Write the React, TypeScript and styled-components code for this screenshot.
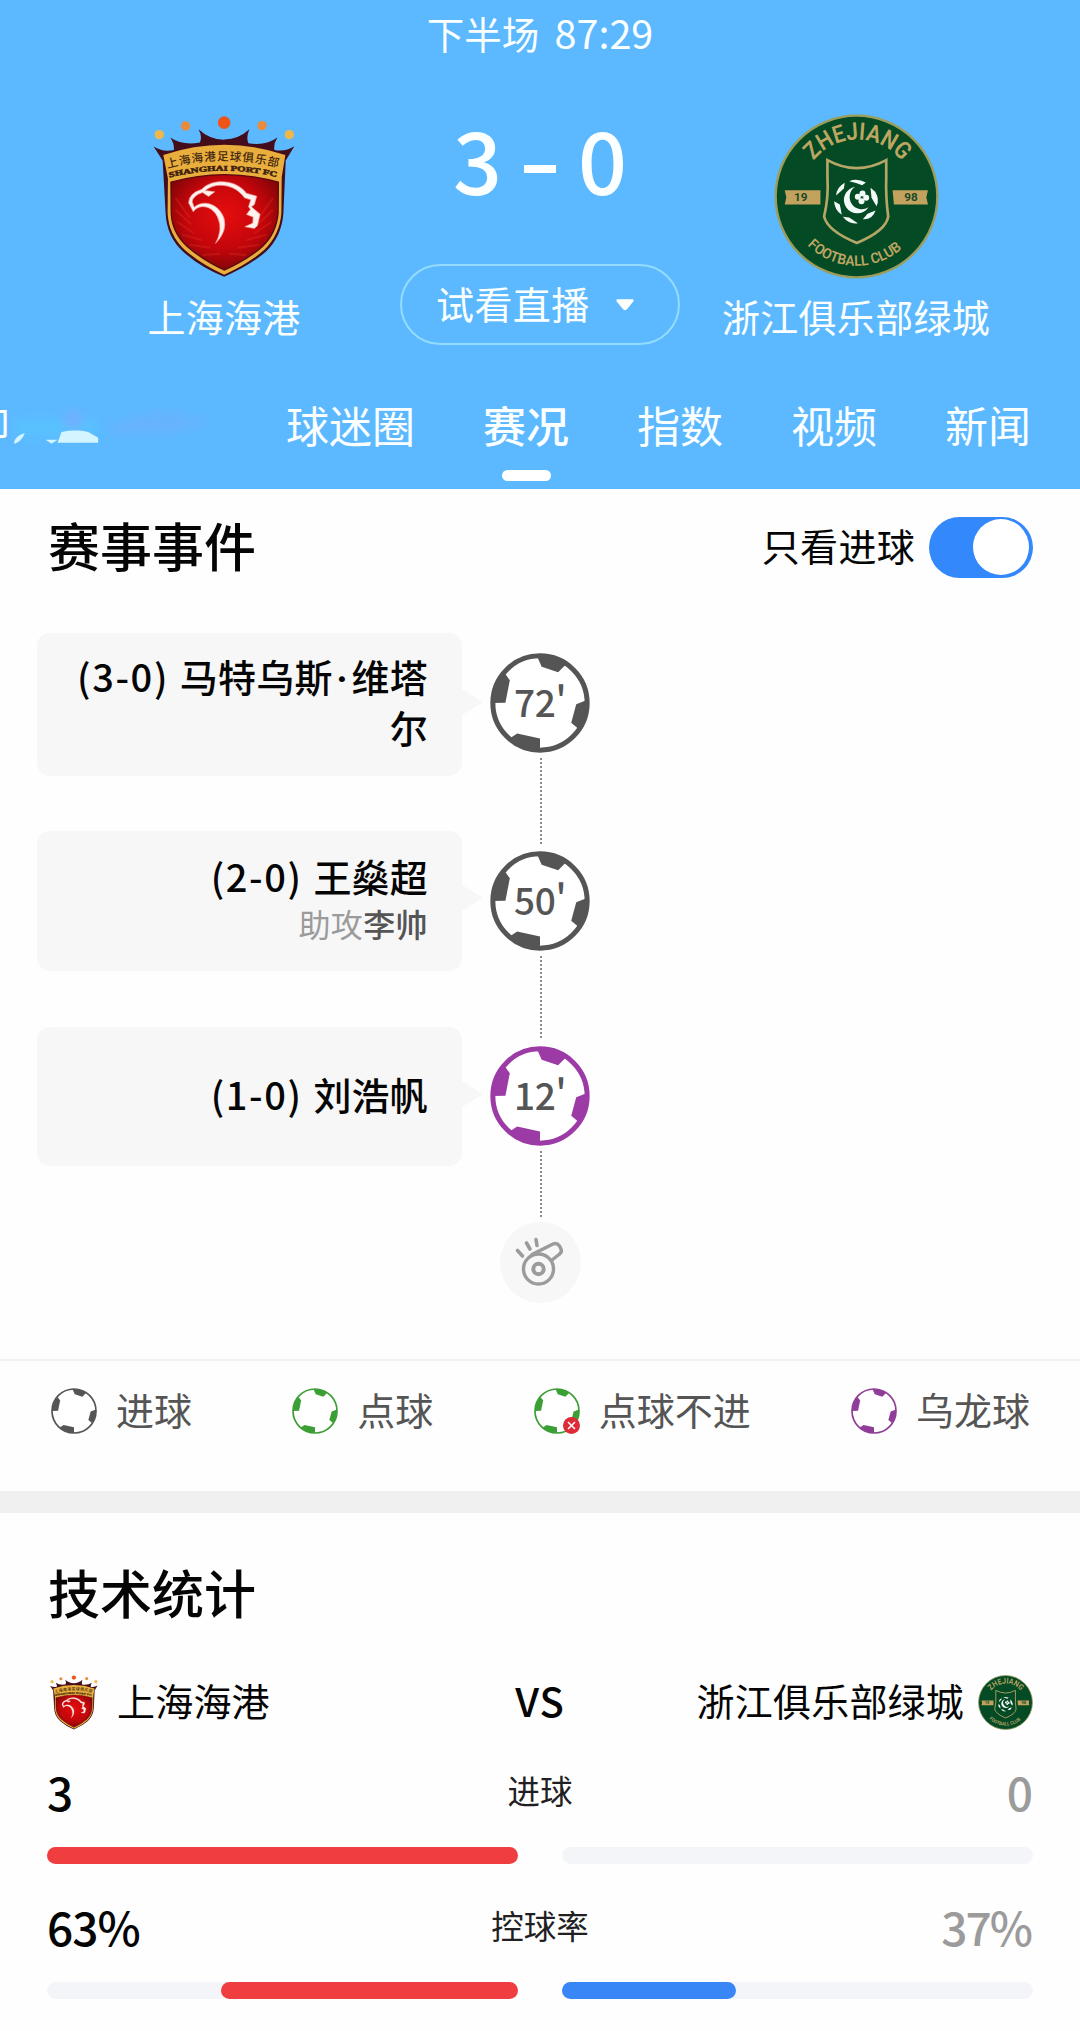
import React, { useState } from 'react';
import styled, { createGlobalStyle } from 'styled-components';

interface MatchEvent {
  score: string;
  player: string[];
  assist?: string;
  minute: number;
  color: string;
  height: number;
  gap: number;
  ballTop: number;
  line: number;
}

interface Stat {
  label: string;
  home: string;
  away: string;
  homePct: number;
  awayPct: number;
}

const GRAY = '#555555';
const GREEN = '#3c9f35';
const PURPLE = '#9c3ba6';

const events: MatchEvent[] = [
  { score: '3-0', player: ['马特乌斯', '维塔尔'], minute: 72, color: GRAY, height: 143, gap: 55, ballTop: 20, line: 88 },
  { score: '2-0', player: ['王燊超'], assist: '李帅', minute: 50, color: GRAY, height: 140, gap: 56, ballTop: 20, line: 82 },
  { score: '1-0', player: ['刘浩帆'], minute: 12, color: PURPLE, height: 139, gap: 56, ballTop: 19, line: 68 },
];

const stats: Stat[] = [
  { label: '进球', home: '3', away: '0', homePct: 100, awayPct: 0 },
  { label: '控球率', home: '63%', away: '37%', homePct: 63, awayPct: 37 },
];

const tabs = ['球迷圈', '赛况', '指数', '视频', '新闻'];

const Ball: React.FC<{ color: string; ring: number }> = ({ color, ring }) => (
  <svg viewBox="-149 -149 298 298" width="100%" height="100%">
    <circle r={148 - ring / 2} fill="#fff" stroke={color} strokeWidth={ring} />
    <g fill={color}>
      <path d="M-10 -142 L5 -108 L54 -92 L80 -118 Q40 -144 -10 -142Z" />
      <path d="M-106 -90 L-90 -68 L-103 -1 L-142 0 Q-140 -52 -106 -90Z" />
      <path d="M142 -10 L108 4 L93 59 L116 78 Q142 40 142 -10Z" />
      <path d="M-94 108 L-68 91 L0 106 L0 142 Q-54 140 -94 108Z" />
    </g>
  </svg>
);

const PortCrest: React.FC<{ id: string }> = ({ id }) => (
  <svg viewBox="70 45 428 490" width="100%" height="100%">
    <defs>
      <radialGradient id={`${id}-red`} cx="0.5" cy="0.42" r="0.6">
        <stop offset="0" stopColor="#e60d0d" />
        <stop offset="0.6" stopColor="#c3060b" />
        <stop offset="1" stopColor="#7d0508" />
      </radialGradient>
      <path id={`${id}-cn`} d="M113 205 Q284 158 452 205" />
      <path id={`${id}-en`} d="M118 233 Q284 192 446 233" />
    </defs>
    <path
      d="M71 140 Q98 158 132 150 Q133 130 121 113 Q158 138 210 128 Q218 110 206 88 Q240 120 284 119 Q326 118 359 88 Q348 112 356 130 Q410 138 443 113 Q431 132 434 150 Q468 156 494 139 L468 182 L461 340 Q456 410 408 456 Q360 498 283 531 Q210 502 160 456 Q110 410 107 340 L98 182Z"
      fill="#430d1b"
    />
    <path
      d="M100 165 Q284 104 467 165 L456 232 L455 340 Q450 404 404 450 Q356 492 283 525 Q214 494 164 450 Q116 404 113 340 L114 236Z"
      fill="#e9ae3c"
    />
    <path
      d="M123 247 Q284 201 446 247 L445 340 Q440 400 398 440 Q350 482 283 511 Q220 482 172 440 Q126 398 124 340Z"
      fill={`url(#${id}-red)`}
      stroke="#5a0b10"
      strokeWidth="4"
    />
    <g stroke="#ef3224" strokeWidth="6" opacity="0.3" fill="none">
      <path d="M137 295 L180 354 M137 330 L184 374 M141 365 L194 402 M157 405 L216 421 M179 435 L242 444 M218 466 L270 462" />
      <path d="M430 295 L387 354 M430 330 L383 374 M426 365 L373 402 M410 405 L351 421 M388 435 L325 444 M349 466 L297 462" />
    </g>
    <path
      d="M190 336 L176 309 Q177 280 216 268 C244 236 318 236 350 280 L381 289 L374 314 L365 321 L391 343 L383 378 L374 386 L345 381 L369 370 L370 352 L350 344 L362 328 L356 321 L363 300 L344 294 C314 252 259 246 226 272 L255 276 L236 290 L218 278 Q188 288 187 306 L193 322 C222 297 269 313 283 357 Q293 395 257 431 Q279 390 265 357 C253 320 210 308 190 336Z"
      fill="#fff1ee"
      stroke="#f29a92"
      strokeWidth="2"
    />
    <text fontSize="35" fontFamily="'Noto Sans CJK SC', sans-serif" fontWeight="500" fill="#43270f">
      <textPath href={`#${id}-cn`} textLength="336">上海海港足球俱乐部</textPath>
    </text>
    <text fontSize="22" fontWeight="700" fontFamily="'Liberation Serif', serif" fill="#3d210f" stroke="#3d210f" strokeWidth="1.5">
      <textPath href={`#${id}-en`} textLength="326" lengthAdjust="spacingAndGlyphs">SHANGHAI PORT FC</textPath>
    </text>
    <circle cx="88" cy="104" r="14" fill="#eeb84b" />
    <circle cx="167" cy="78" r="14" fill="#e98b3c" />
    <circle cx="283" cy="68" r="19" fill="#ee5418" />
    <circle cx="397" cy="77" r="14" fill="#e98b3c" />
    <circle cx="479" cy="104" r="14" fill="#eeb84b" />
  </svg>
);

const ZhejiangCrest: React.FC<{ id: string }> = ({ id }) => (
  <svg viewBox="43 43 494 494" width="100%" height="100%">
    <defs>
      <path id={`${id}-top`} d="M161 183 A168 168 0 0 1 427 187" />
      <path id={`${id}-bottom`} d="M143 436 A207 207 0 0 0 441 432" />
    </defs>
    <circle cx="290" cy="290" r="242" fill="#044a25" stroke="#9b9d5b" strokeWidth="7" />
    <g fontFamily="Roboto, sans-serif" fontWeight="600" fill="#bda662">
      <text fontSize="72">
        <textPath href={`#${id}-top`} textLength="304" lengthAdjust="spacingAndGlyphs">ZHEJIANG</textPath>
      </text>
      <text fontSize="43">
        <textPath href={`#${id}-bottom`} textLength="312" lengthAdjust="spacingAndGlyphs">FOOTBALL CLUB</textPath>
      </text>
    </g>
    <path d="M75 271 H182 V314 H75 L80 292Z M398 271 H504 L499 292 L504 314 H402Z" fill="#c2a25c" />
    <g fontFamily="Roboto, sans-serif" fontWeight="700" fontSize="35" fill="#174a2a">
      <text x="103" y="305">19</text>
      <text x="433" y="305">98</text>
    </g>
    <path
      d="M203 181 Q290 229 379 181 V235 Q377 290 385 350 Q378 393 291 429 Q203 393 193 350 Q207 290 203 235Z"
      fill="#044a25"
      stroke="#b5a667"
      strokeWidth="8"
    />
    <g fill="#f2fbf8">
      <path d="M268 244 Q292 234 318 248 L307 256 Q290 249 268 244Z" />
      <path d="M229 287 Q231 262 255 249 L252 266Z" />
      <path d="M223 304 L240 314 L246 345 Q224 330 223 304Z" />
      <path d="M249 351 L268 353 L294 370 Q267 374 249 351Z" />
      <path d="M309 358 L323 342 L347 332 Q338 360 309 358Z" />
      <path d="M332 264 L346 276 Q360 300 350 319 L335 294Z" />
      <path d="M286 261 A40 40 0 1 0 326 322 A32 32 0 1 1 286 261Z" />
      <circle cx="294" cy="291" r="9" />
      <circle cx="308" cy="281" r="9" />
      <circle cx="319" cy="294" r="9" />
      <circle cx="305" cy="304" r="9" />
    </g>
  </svg>
);

const Whistle = () => (
  <svg viewBox="0 0 81 81" width="81" height="81" fill="none" stroke="#9b9b9b" strokeWidth="3.4" strokeLinecap="round">
    <circle cx="38.5" cy="47" r="15" />
    <circle cx="38.5" cy="47" r="5.2" strokeWidth="4" />
    <path d="M32 32.5 L53 22 Q57 20.5 59.5 24 L61 27 Q62.5 30 59 32.5 L52 38" strokeLinejoin="round" />
    <path d="M17.5 28.5 L22.5 34 M26.5 21 L30 27 M36 17.5 L37 23.5" strokeWidth="3.6" />
  </svg>
);

const App: React.FC = () => {
  const [goalsOnly, setGoalsOnly] = useState(true);
  const [activeTab, setActiveTab] = useState('赛况');

  return (
    <>
      <GlobalStyle />
      <Page>
        <Header>
          <MatchClock>下半场 <span>87:29</span></MatchClock>
          <MatchRow>
            <Team>
              <HomeCrest><PortCrest id="home" /></HomeCrest>
              <TeamName>上海海港</TeamName>
            </Team>
            <Center>
              <Score><span>3</span><Dash /><span>0</span></Score>
              <LiveButton>
                试看直播
                <svg width="20" height="14" viewBox="0 0 20 14">
                  <path d="M2.5 2.5 H17.5 L11 10.5 Q10 11.5 9 10.5Z" fill="#fff" stroke="#fff" strokeWidth="2.4" strokeLinejoin="round" />
                </svg>
              </LiveButton>
            </Center>
            <Team>
              <AwayCrest><ZhejiangCrest id="away" /></AwayCrest>
              <TeamName>浙江俱乐部绿城</TeamName>
            </Team>
          </MatchRow>
          <Tabs>
            <CutTab>
              <span>印</span>
              <svg width="210" height="56" viewBox="0 0 210 56">
                <defs>
                  <filter id="smear" x="-20%" y="-50%" width="140%" height="200%">
                    <feGaussianBlur stdDeviation="5" />
                  </filter>
                  <filter id="edge"><feGaussianBlur stdDeviation="0.8" /></filter>
                </defs>
                <g filter="url(#smear)">
                  <path d="M6 24 H86 V40 H4Z" fill="#58c2ff" />
                  <circle cx="64" cy="24" r="10" fill="#6fb0ff" />
                  <path d="M100 28 L155 14 L205 26 L160 38 H100Z" fill="#66b3fc" />
                </g>
                <g filter="url(#edge)" fill="#d4f5ff">
                  <path d="M4 47 Q5 40 15 37 Q12 45 5 48Z" />
                  <path d="M36 44 L48 44 L42 48Z" />
                  <path d="M52 36 Q66 33 79 36 L89 42 V47 H48Z" />
                </g>
              </svg>
            </CutTab>
            {tabs.map((tab) => (
              <Tab key={tab} $active={tab === activeTab} onClick={() => setActiveTab(tab)}>
                {tab}
              </Tab>
            ))}
          </Tabs>
        </Header>

        <EventsHeader>
          <SectionTitle>赛事事件</SectionTitle>
          <Filter>
            <span>只看进球</span>
            <Switch $on={goalsOnly} onClick={() => setGoalsOnly(!goalsOnly)} />
          </Filter>
        </EventsHeader>

        <Timeline>
          {events.map((event) => (
            <EventRow key={event.minute} $height={event.height} $gap={event.gap}>
              <EventCard>
                <Scorer>
                  <EventScore>({event.score})</EventScore> {event.player[0]}
                  {event.player[1] && <><NameDot>·</NameDot>{event.player[1]}</>}
                </Scorer>
                {event.assist && <Assist>助攻<b>{event.assist}</b></Assist>}
              </EventCard>
              <Arrow />
              <Marker $top={event.ballTop}>
                <BigBall>
                  <Ball color={event.color} ring={15} />
                  <Minute>{event.minute}<sup>'</sup></Minute>
                </BigBall>
                <Dots $length={event.line} />
              </Marker>
            </EventRow>
          ))}
          <WhistleBadge><Whistle /></WhistleBadge>
        </Timeline>

        <Legend>
          <LegendItem><SmallBall><Ball color={GRAY} ring={11} /></SmallBall>进球</LegendItem>
          <LegendItem><SmallBall><Ball color={GREEN} ring={11} /></SmallBall>点球</LegendItem>
          <LegendItem>
            <SmallBall>
              <Ball color={GREEN} ring={11} />
              <MissBadge>
                <svg width="17" height="17" viewBox="0 0 17 17" stroke="#fff" strokeWidth="1.5">
                  <path d="M5 5 L12 12 M12 5 L5 12" />
                </svg>
              </MissBadge>
            </SmallBall>
            点球不进
          </LegendItem>
          <LegendItem><SmallBall><Ball color="#8f3d98" ring={11} /></SmallBall>乌龙球</LegendItem>
        </Legend>

        <Band />

        <StatsSection>
          <SectionTitle>技术统计</SectionTitle>
          <Versus>
            <Side>
              <MiniPort><PortCrest id="mini-home" /></MiniPort>
              <SideName>上海海港</SideName>
            </Side>
            <Vs>VS</Vs>
            <Side $right>
              <SideName>浙江俱乐部绿城</SideName>
              <MiniZhejiang><ZhejiangCrest id="mini-away" /></MiniZhejiang>
            </Side>
          </Versus>
          {stats.map((stat) => (
            <StatBlock key={stat.label}>
              <StatLine>
                <StatValue>{stat.home}</StatValue>
                <StatLabel>{stat.label}</StatLabel>
                <StatValue $away>{stat.away}</StatValue>
              </StatLine>
              <Bars>
                <Track $reverse>
                  <Fill $color="#f03e40" style={{ width: `${stat.homePct}%` }} />
                </Track>
                <Track>
                  <Fill $color="#3986f6" style={{ width: `${stat.awayPct}%` }} />
                </Track>
              </Bars>
            </StatBlock>
          ))}
        </StatsSection>
      </Page>
    </>
  );
};

const GlobalStyle = createGlobalStyle`
  * {
    box-sizing: border-box;
  }

  body {
    margin: 0;
    background: #fefefe;
    font-family: 'Noto Sans CJK SC', sans-serif;
  }

  svg {
    display: block;
  }
`;

const Page = styled.div`
  width: 1080px;
  height: 2031px;
  overflow: hidden;
  background: #fefefe;
  color: #050505;
`;

const Header = styled.header`
  height: 489px;
  background: #5cb9ff;
  color: #fbffff;
  overflow: hidden;
`;

const MatchClock = styled.div`
  height: 70px;
  line-height: 64px;
  font-size: 37.5px;
  text-align: center;

  span {
    font-size: 39.5px;
    margin-left: 7px;
  }
`;

const MatchRow = styled.div`
  display: grid;
  grid-template-columns: 448px 184px 448px;
  height: 310px;
`;

const Team = styled.div`
  display: flex;
  flex-direction: column;
  align-items: center;
`;

const HomeCrest = styled.div`
  width: 143px;
  height: 163px;
  margin: 45px 0 10px;
`;

const AwayCrest = styled.div`
  width: 165px;
  height: 165px;
  margin: 44px 0 9px;
`;

const TeamName = styled.div`
  font-size: 38px;
  line-height: 56px;
  letter-spacing: 0.3px;
  white-space: nowrap;
`;

const Center = styled.div`
  display: flex;
  flex-direction: column;
  align-items: center;
`;

const Score = styled.div`
  display: flex;
  align-items: center;
  justify-content: space-between;
  width: 174px;
  height: 120px;
  margin: 28px 0 46px;
  font-size: 86px;
  line-height: 120px;
  font-weight: 500;
`;

const Dash = styled.i`
  width: 32px;
  height: 8px;
  margin-top: 22px;
  background: #fbffff;
`;

const LiveButton = styled.button`
  flex: none;
  display: flex;
  align-items: center;
  width: 280px;
  height: 81px;
  padding: 0 43px 5px 34px;
  justify-content: space-between;
  border: 2px solid #94dcff;
  border-radius: 41px;
  background: none;
  color: inherit;
  font: inherit;
  font-size: 38px;
  letter-spacing: 0.4px;
  white-space: nowrap;

  svg {
    margin-top: 6px;
  }
`;

const Tabs = styled.nav`
  display: flex;
  gap: 68px;
  height: 109px;
  padding-top: 13px;
`;

const CutTab = styled.div`
  display: flex;
  align-items: center;
  width: 218px;
  height: 62px;
  overflow: hidden;
  font-size: 40px;
  line-height: 62px;

  span {
    margin-left: -30px;
  }
`;

const Tab = styled.div<{ $active: boolean }>`
  display: flex;
  flex-direction: column;
  align-items: center;
  font-size: 43px;
  line-height: 62px;
  font-weight: ${(p) => (p.$active ? 500 : 400)};
  white-space: nowrap;
  cursor: pointer;

  &::after {
    content: '';
    width: 49px;
    height: 11px;
    margin-top: 15px;
    border-radius: 6px;
    background: ${(p) => (p.$active ? '#ffffff' : 'transparent')};
  }
`;

const EventsHeader = styled.div`
  display: flex;
  align-items: center;
  justify-content: space-between;
  height: 144px;
  padding: 0 47px 28px 48px;
`;

const SectionTitle = styled.h2`
  margin: -4px 0 0;
  font-size: 52px;
  line-height: 76px;
  font-weight: 500;
`;

const Filter = styled.div`
  display: flex;
  align-items: center;
  gap: 14px;
  font-size: 38px;
  letter-spacing: 0.3px;

  span {
    padding-bottom: 5px;
  }
`;

const Switch = styled.button<{ $on: boolean }>`
  display: flex;
  justify-content: ${(p) => (p.$on ? 'flex-end' : 'flex-start')};
  width: 104px;
  height: 61px;
  padding: 2px 4px;
  border: none;
  border-radius: 31px;
  background: ${(p) => (p.$on ? '#3388fb' : '#dddddd')};
  cursor: pointer;

  &::after {
    content: '';
    width: 56px;
    height: 56px;
    border-radius: 50%;
    background: #ffffff;
  }
`;

const Timeline = styled.section`
  height: 726px;
  padding-left: 37px;
`;

const EventRow = styled.div<{ $height: number; $gap: number }>`
  display: flex;
  align-items: center;
  height: ${(p) => p.$height}px;
  margin-bottom: ${(p) => p.$gap}px;
`;

const EventCard = styled.div`
  display: flex;
  flex-direction: column;
  justify-content: center;
  width: 425px;
  height: 100%;
  padding: 0 34px 7px;
  border-radius: 13px;
  background: #f7f7f7;
  text-align: right;
`;

const Scorer = styled.div`
  font-size: 38px;
  line-height: 51px;
  font-weight: 500;
  letter-spacing: 0.2px;
`;

const EventScore = styled.span`
  margin-right: 2px;
  letter-spacing: 1.6px;
`;

const NameDot = styled.span`
  display: inline-block;
  width: 19px;
  text-align: center;
  font-family: Roboto, sans-serif;
  font-weight: 700;
  line-height: 1;
`;

const Assist = styled.div`
  font-size: 32px;
  line-height: 45px;
  letter-spacing: 0.4px;
  color: #9b9b9b;

  b {
    font-weight: 500;
    color: ${GRAY};
  }
`;

const Arrow = styled.div`
  margin-bottom: 6px;
  border: 13px solid transparent;
  border-left: 21px solid #f7f7f7;
  border-right: none;
`;

const Marker = styled.div<{ $top: number }>`
  align-self: flex-start;
  width: 100px;
  height: 198px;
  margin-left: 7px;
  padding-top: ${(p) => p.$top}px;
`;

const BigBall = styled.div`
  position: relative;
  width: 100px;
  height: 100px;
`;

const Minute = styled.span`
  position: absolute;
  inset: 0;
  text-align: center;
  font-size: 37px;
  line-height: 96px;
  font-weight: 500;
  letter-spacing: -0.4px;
  color: ${GRAY};

  sup {
    font-size: inherit;
    line-height: 0;
    vertical-align: 4px;
  }
`;

const Dots = styled.div<{ $length: number }>`
  width: 2px;
  height: ${(p) => p.$length}px;
  margin: 5px 0 0 50px;
  background: repeating-linear-gradient(to bottom, #8a8a8a 0 2px, transparent 2px 4px);
`;

const WhistleBadge = styled.div`
  width: 81px;
  height: 81px;
  margin-left: 463px;
  border-radius: 50%;
  background: #f7f7f7;
`;

const Legend = styled.div`
  display: flex;
  justify-content: space-between;
  height: 132px;
  padding: 27px 50px 0 51px;
  border-top: 2px solid #f1f1f1;
`;

const LegendItem = styled.div`
  display: flex;
  gap: 19px;
  height: 48px;
  font-size: 38px;
  line-height: 41px;
  color: ${GRAY};
`;

const SmallBall = styled.div`
  position: relative;
  width: 46px;
  height: 46px;
`;

const MissBadge = styled.div`
  position: absolute;
  right: 0;
  bottom: 0;
  border-radius: 50%;
  background: #dc2c37;
`;

const Band = styled.div`
  height: 22px;
  background: #f0f0f0;
`;

const StatsSection = styled.section`
  padding: 45px 47px 0;

  ${SectionTitle} {
    padding-left: 1px;
  }
`;

const Versus = styled.div`
  display: grid;
  grid-template-columns: 1fr auto 1fr;
  align-items: center;
  height: 60px;
  margin-top: 41px;
  font-size: 38px;
  letter-spacing: 0.2px;
`;

const Side = styled.div<{ $right?: boolean }>`
  display: flex;
  align-items: center;
  justify-content: ${(p) => (p.$right ? 'flex-end' : 'flex-start')};
  gap: ${(p) => (p.$right ? 14 : 19)}px;
  padding-left: ${(p) => (p.$right ? 0 : 3)}px;
  white-space: nowrap;
`;

const SideName = styled.span`
  padding-bottom: 6px;
`;

const MiniPort = styled.div`
  width: 48px;
  height: 55px;
`;

const MiniZhejiang = styled.div`
  width: 55px;
  height: 55px;
`;

const Vs = styled.div`
  padding-bottom: 5px;
  font-size: 40px;
  font-weight: 500;
  letter-spacing: 1px;
`;

const StatBlock = styled.div`
  height: 135px;
  padding-top: 31px;
`;

const StatLine = styled.div`
  display: grid;
  grid-template-columns: 1fr auto 1fr;
  height: 85px;
  line-height: 59px;
`;

const StatValue = styled.span<{ $away?: boolean }>`
  font-size: 46px;
  font-weight: 500;
  letter-spacing: ${(p) => (p.$away ? -2 : -1)}px;
  padding-right: 2px;
  color: ${(p) => (p.$away ? '#9b9b9b' : '#050505')};
  text-align: ${(p) => (p.$away ? 'right' : 'left')};
`;

const StatLabel = styled.span`
  font-size: 32.5px;
  line-height: 56px;
  color: #1f1f24;
`;

const Bars = styled.div`
  display: grid;
  grid-template-columns: 471px 471px;
  justify-content: space-between;
`;

const Track = styled.div<{ $reverse?: boolean }>`
  display: flex;
  justify-content: ${(p) => (p.$reverse ? 'flex-end' : 'flex-start')};
  height: 17px;
  border-radius: 9px;
  background: #f4f5f9;
`;

const Fill = styled.div<{ $color: string }>`
  border-radius: 9px;
  background: ${(p) => p.$color};
`;

export default App;
